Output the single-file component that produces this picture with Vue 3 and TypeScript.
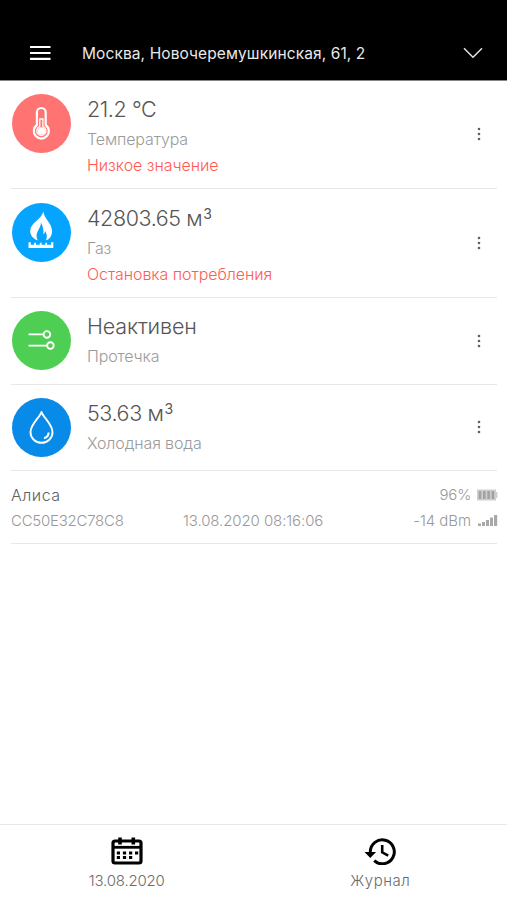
<script setup lang="ts">
type IconName = 'thermometer' | 'gas' | 'leak' | 'drop'

interface Sensor {
  icon: IconName
  value: string
  cubic?: boolean
  label: string
  alert?: string
}

const sensors: Sensor[] = [
  { icon: 'thermometer', value: '21.2 °C', label: 'Температура', alert: 'Низкое значение' },
  { icon: 'gas', value: '42803.65 м', cubic: true, label: 'Газ', alert: 'Остановка потребления' },
  { icon: 'leak', value: 'Неактивен', label: 'Протечка' },
  { icon: 'drop', value: '53.63 м', cubic: true, label: 'Холодная вода' },
]
</script>

<template>
  <div class="screen">
    <header class="bar">
      <svg class="menu" width="22" height="16" viewBox="0 0 22 16">
        <path d="M1 2h20.500M1 8h20.500M1 13.800h20.500" stroke="#fff" stroke-width="2.200" />
      </svg>
      <span class="address">Москва, Новочеремушкинская, 61, 2</span>
      <svg class="chevron" width="20" height="12" viewBox="0 0 20 12">
        <path d="M1 1.200l9 9 9-9" fill="none" stroke="#e4e4e4" stroke-width="1.500" />
      </svg>
    </header>

    <main class="list">
      <section v-for="s in sensors" :key="s.icon" class="row" :class="[s.icon, { tall: s.alert }]">
        <div class="disc">
          <svg v-if="s.icon === 'thermometer'" width="59" height="59" viewBox="0 0 59 59" fill="none" stroke="#fff">
            <path d="M24.900 31V18.400a4.400 4.400 0 0 1 8.800 0V31a7.500 7.500 0 1 1-8.800 0z" stroke-width="2.200" />
            <path d="M27.800 25v7.600a4.600 4.600 0 1 0 3.100 0V25z" stroke-width="1.300" />
            <circle cx="29.400" cy="37" r="3.800" fill="#fff" stroke="none" />
          </svg>
          <svg v-else-if="s.icon === 'gas'" width="59" height="59" viewBox="0 0 59 59" fill="#fff">
            <path d="M31.300 8.500C32 15.500 40 20 40 28c0 4.600-2 8-6 9.300 1.500-3.500.8-6.500-1-9.500-.1 1.800-.7 3-1.700 3.700.7-4.500-.4-8.500-2.400-12 .3 5.500-5.200 9-4.200 14.500.2 1.400.6 2.500 1.100 3.500C21 35.700 18 32 18.200 27.500 18.800 19.500 29.500 16.500 31.300 8.500z" />
            <path d="M16.500 39.200h2.300v2.600h3.400v-2h1.800v2h3.800v-2h1.800v2h3.700v-2h1.800v2h4v-2.600h2.200v5.800h-24.800z" />
          </svg>
          <svg v-else-if="s.icon === 'leak'" width="59" height="59" viewBox="0 0 59 59" fill="none" stroke="#fff" stroke-width="1.900">
            <path d="M16.500 23.400h15M16.500 34.600h18.500" />
            <circle cx="34.900" cy="23.400" r="3.300" />
            <circle cx="38.400" cy="34.600" r="3.300" />
          </svg>
          <svg v-else width="59" height="59" viewBox="0 0 59 59" fill="none" stroke="#fff">
            <path d="M29.500 14C27.500 20 18.500 26 18.500 34.300a11 10.500 0 0 0 22 0C40.500 26 31.500 20 29.500 14z" stroke-width="1.900" stroke-linejoin="round" />
            <path d="M36.600 34.500c0 3.200-1.800 5-4.600 5.700" stroke-width="2.100" />
          </svg>
        </div>
        <div class="info">
          <div class="value"><span>{{ s.value }}</span><sup v-if="s.cubic">3</sup></div>
          <div class="label"><span>{{ s.label }}</span></div>
          <div v-if="s.alert" class="alert"><span>{{ s.alert }}</span></div>
        </div>
        <svg class="dots" width="6" height="14" viewBox="0 0 6 14" fill="#606060">
          <circle cx="3" cy="2" r="1.300" /><circle cx="3" cy="7" r="1.300" /><circle cx="3" cy="12" r="1.300" />
        </svg>
      </section>

      <section class="device">
        <div class="line first">
          <span class="name">Алиса</span>
          <span class="percent">96%</span>
          <svg class="meter" width="21" height="12" viewBox="0 0 21 12">
            <path d="M0 .5h19V3h1.500v6H19v2.500H0z" fill="#cfcfcf" />
            <path d="M3 2v8M7.300 2v8M11.600 2v8M15.900 2v8" stroke="#a2a2a2" stroke-width="2.600" />
          </svg>
        </div>
        <div class="line">
          <span class="mac">CC50E32C78C8</span>
          <span class="time">13.08.2020 08:16:06</span>
          <span class="dbm">-14 dBm</span>
          <svg class="meter" width="21" height="12" viewBox="0 0 21 12" fill="#a8a8a8">
            <path d="M1 8.500h3V11H1zM5 7h3v4H5zM9 5h3v6H9zM13 2.500h3V11h-3zM17 0h3.200v11H17z" />
          </svg>
        </div>
      </section>
    </main>

    <nav class="tabs">
      <div class="tab">
        <svg width="32" height="28" viewBox="0 0 32 28">
          <rect x="2" y="4" width="28" height="22" rx="2" fill="none" stroke="#000" stroke-width="3.200" />
          <path d="M2 10.300h28" stroke="#000" stroke-width="2.800" />
          <path d="M9 .5v7M22.300 .5v7" stroke="#000" stroke-width="3.600" />
          <path d="M5.800 16h3.200M11.900 16h3.200M18 16h3.200M24 16h3.200M5.800 20.500h3.200M11.900 20.500h3.200M18 20.500h3.200" stroke="#000" stroke-width="3" />
        </svg>
        <span class="date">13.08.2020</span>
      </div>
      <div class="tab">
        <svg width="32" height="28" viewBox="0 0 32 28" fill="none" stroke="#000">
          <path d="M6.300 16V14.800A12 12 0 1 1 10.200 23.700" stroke-width="3" />
          <path d="M.5 15h11.600L6.300 21z" fill="#000" stroke="none" />
          <path d="M18.200 8v7.300l6 3.400" stroke-width="2.600" />
        </svg>
        <span class="journal">Журнал</span>
      </div>
    </nav>
  </div>
</template>

<style>
body { background: #fff; }
</style>

<style scoped>
.screen {
  width: 507px; height: 900px; display: flex; flex-direction: column;
  overflow: hidden; background: #fff;
  font-family: Inter, "Liberation Sans", sans-serif; font-weight: 300;
}
.screen * { box-sizing: border-box; }
svg { display: block; flex: none; }
span, sup { white-space: nowrap; }
.bar { height: 81px; flex: none; background: #000; border-bottom: 1px solid #858585; display: flex; align-items: center; padding: 26px 24px 0 29px; }
.address { margin-left: 31px; color: #e8e8e8; font-size: 15.500px; font-weight: 400; letter-spacing: .1px; }
.chevron { margin-left: auto; }
.list { flex: 1; padding: 0 10px 0 11px; }
.row { display: flex; align-items: flex-start; padding: 13px 15px 0 1px; border-bottom: 1px solid #e7e7e7; }
.row.thermometer { height: 108px; }
.row.gas { height: 109px; padding-top: 14px; }
.row.leak { height: 86.500px; }
.row.drop { height: 86.500px; }
.disc { width: 59px; height: 59px; border-radius: 50%; flex: none; }
.thermometer .disc { background: #ff7373; }
.gas .disc { background: #05a5ff; }
.leak .disc { background: #4fce54; }
.drop .disc { background: #078ae8; }
.info { margin-left: 16px; flex: 1; }
.value { height: 31px; line-height: 31px; color: #555; font-size: 21.500px; letter-spacing: -.4px; display: flex; }
.leak .value { letter-spacing: -.15px; }
.value sup { font-size: 14px; line-height: 22px; vertical-align: baseline; font-weight: 400; margin-left: 1px; }
.label { height: 27px; line-height: 28px; color: #9b9b9b; font-size: 16px; letter-spacing: -.13px; }
.alert { height: 26px; line-height: 26px; color: #ff5b55; font-size: 16px; letter-spacing: -.06px; }
.dots { margin-top: 22.500px; }
.tall .dots { margin-top: 33px; }
.device { height: 73px; border-bottom: 1px solid #e4e8e8; padding-top: 12px; }
.line { height: 25px; display: flex; align-items: center; color: #999; font-size: 15px; }
.first { padding-bottom: 2px; }
.name { color: #606060; font-size: 16px; letter-spacing: .5px; }
.percent { margin-left: auto; letter-spacing: -.2px; }
.mac { width: 172px; letter-spacing: -.25px; }
.time { letter-spacing: -.1px; }
.dbm { margin-left: auto; letter-spacing: -.05px; }
.meter { margin: 0 -1px 0 6px; }
.tabs { height: 76px; flex: none; border-top: 1px solid #e8e8e8; display: flex; background: #fff; }
.tab { flex: 1; display: flex; flex-direction: column; align-items: center; padding-top: 12px; color: #6c6c6c; font-size: 15px; }
.tab span { margin-top: 7px; line-height: 18px; }
.date { letter-spacing: -.2px; }
.journal { letter-spacing: .5px; }
</style>
